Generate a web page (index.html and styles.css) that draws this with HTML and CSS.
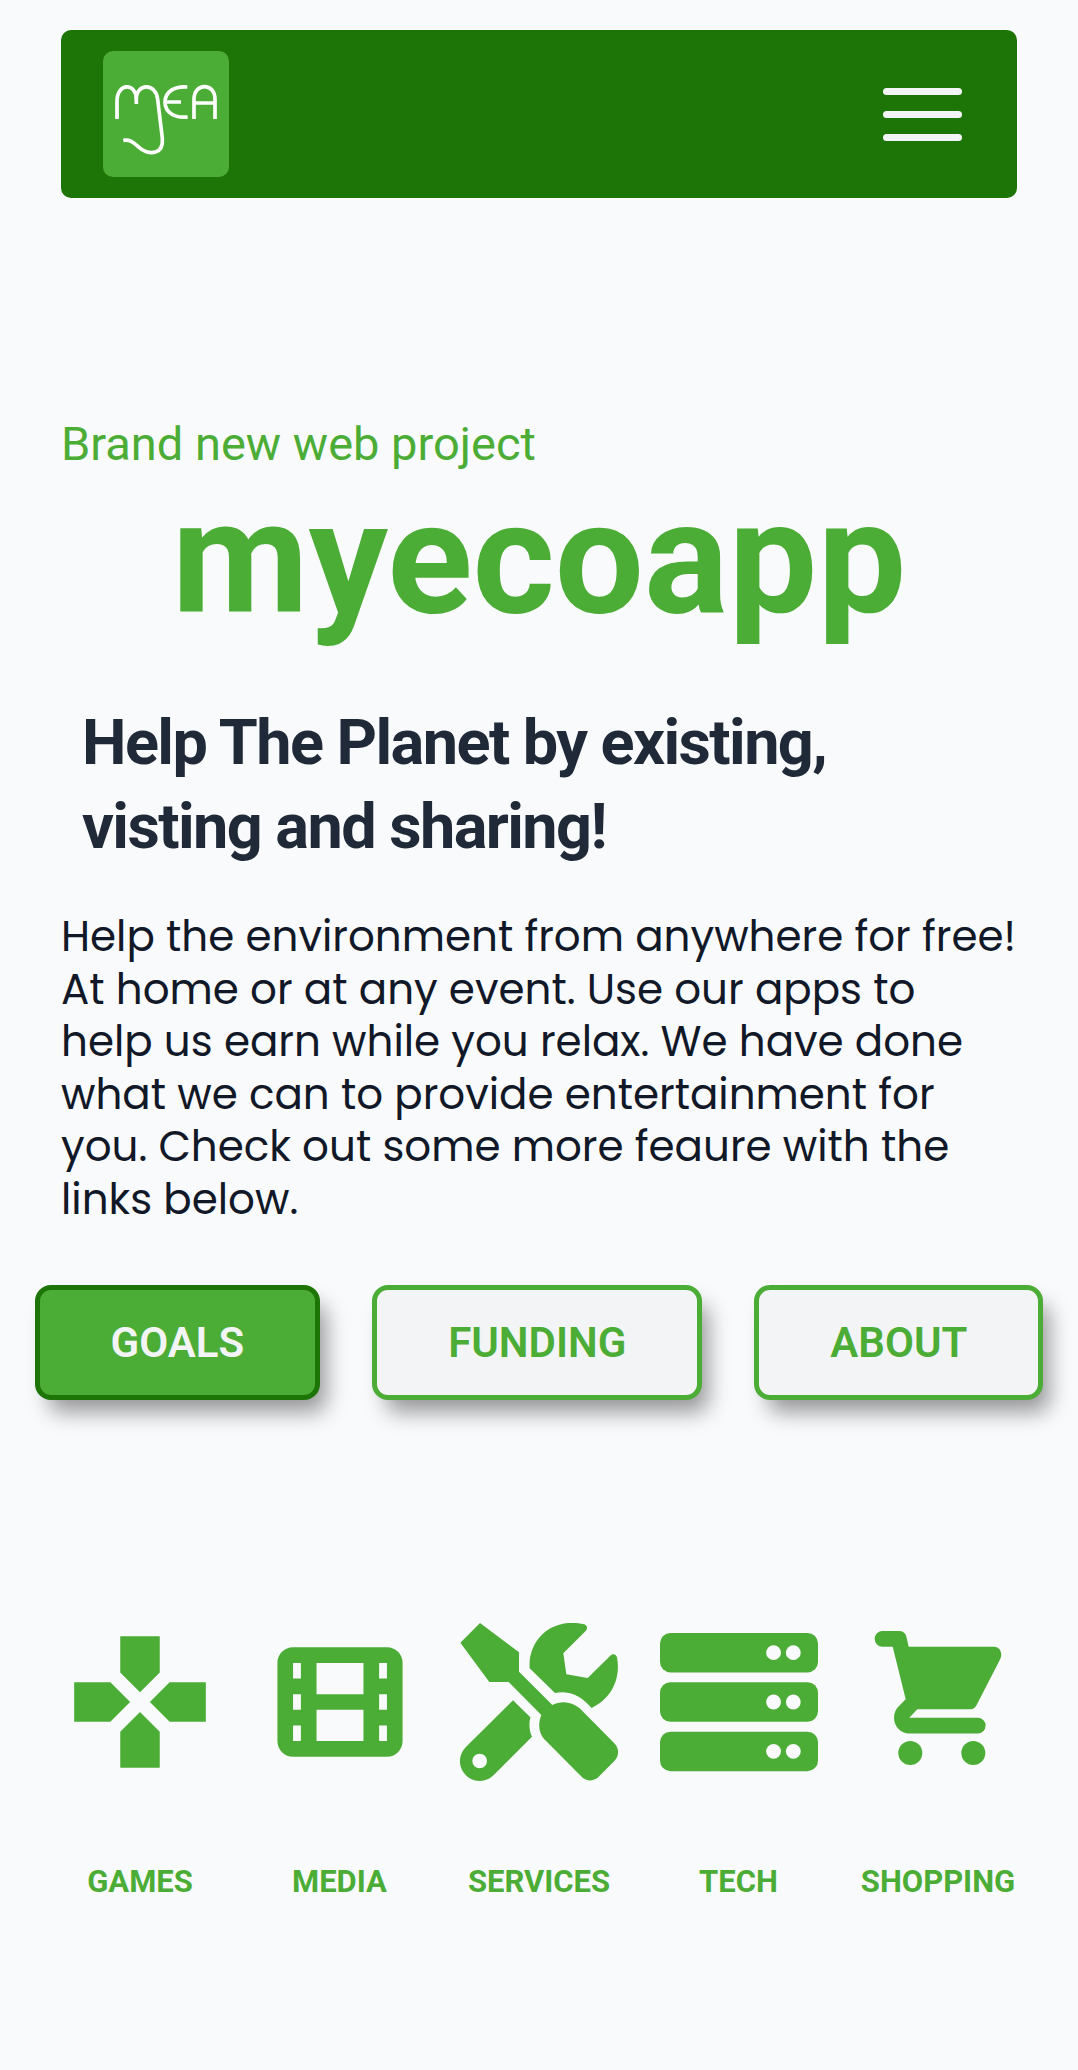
FILE: index.html
```html
<!DOCTYPE html>
<html lang="en">
<head>
<meta charset="utf-8">
<meta name="viewport" content="width=device-width, initial-scale=1">
<title>myecoapp</title>
<link rel="stylesheet" href="styles.css">
</head>
<body>
<div class="page">
  <header class="navbar">
    <a class="logo" href="#" aria-label="MEA home">
      <svg viewBox="159 93 378 378" fill="none" stroke="currentColor" stroke-width="11" aria-hidden="true">
        <path d="M201 297V244C201 186 259 188 259 238V252"/>
        <path d="M259 238C259 188 318 188 323 238L337 355C341 404 300 405 272 386C255 373 244 357 220 361"/>
        <path d="M412 201C372 198 345 216 345 246C345 278 374 295 413 291M345 246H393"/>
        <path d="M432 297V238C432 187 495 187 495 238V297M432 249H495"/>
      </svg>
    </a>
    <button class="menu-button" type="button" aria-label="Menu">
      <span class="menu-bar"></span>
      <span class="menu-bar"></span>
      <span class="menu-bar"></span>
    </button>
  </header>

  <main>
    <section class="hero">
      <p class="tagline">Brand new web project</p>
      <h1 class="title">myecoapp</h1>
      <h2 class="subtitle">Help The Planet by existing, visting and sharing!</h2>
      <p class="intro">Help the environment from anywhere for free! At home or at any event. Use our apps to help us earn while you relax. We have done what we can to provide entertainment for you. Check out some more feaure with the links below.</p>
      <div class="actions">
        <button class="button button-primary" type="button">GOALS</button>
        <button class="button" type="button">FUNDING</button>
        <button class="button" type="button">ABOUT</button>
      </div>
    </section>

    <nav class="categories" aria-label="Categories">
      <a class="category" href="#">
        <svg class="category-icon" viewBox="0 0 24 24" aria-hidden="true"><path d="M15 7.500V2H9v5.500l3 3 3-3zM7.500 9H2v6h5.500l3-3-3-3zM9 16.500V22h6v-5.500l-3-3-3 3zM16.500 9l-3 3 3 3H22V9h-5.500z"/></svg>
        <span>GAMES</span>
      </a>
      <a class="category" href="#">
        <svg class="category-icon" viewBox="-2.100 -3.100 20.200 20.200" aria-hidden="true"><path fill-rule="evenodd" d="M2 0H14A2 2 0 0 1 16 2V12A2 2 0 0 1 14 14H2A2 2 0 0 1 0 12V2A2 2 0 0 1 2 0ZM5 2V6H11V2ZM5 8V12H11V8ZM2 2V4H3V2ZM2 6V8H3V6ZM2 10V12H3V10ZM13 2V4H14V2ZM13 6V8H14V6ZM13 10V12H14V10Z"/></svg>
        <span>MEDIA</span>
      </a>
      <a class="category" href="#">
        <svg class="category-icon" viewBox="90 69 474 474" aria-hidden="true">
          <path d="M150 69L267 157V215L367 315C395 301 425 305 449 325L553 430C568 445 568 468 553 483L506 530C491 545 469 545 455 530L343 418C325 397 324 370 334 345L236 246H178L91 128Z"/>
          <path d="M299 205C293 120 365 50 463 73C472 77 474 86 467 93L400 160L409 223L473 234L541 167C548 160 558 162 561 172C573 235 545 296 485 324L470 309C443 281 409 272 375 279Z"/>
          <path fill-rule="evenodd" d="M249 301L301 352C296 372 298 392 306 410L192 524C168 549 130 549 107 525C84 502 84 466 107 442ZM149 461A22 22 0 1 0 149 505A22 22 0 1 0 149 461Z"/>
        </svg>
        <span>SERVICES</span>
      </a>
      <a class="category" href="#">
        <svg class="category-icon" viewBox="0 0 512 512" aria-hidden="true">
          <rect x="0" y="32" width="512" height="128" rx="34"/>
          <rect x="0" y="192" width="512" height="128" rx="34"/>
          <rect x="0" y="352" width="512" height="128" rx="34"/>
          <g class="icon-hole">
            <circle cx="368" cy="96" r="24"/><circle cx="432" cy="96" r="24"/>
            <circle cx="368" cy="256" r="24"/><circle cx="432" cy="256" r="24"/>
            <circle cx="368" cy="416" r="24"/><circle cx="432" cy="416" r="24"/>
          </g>
        </svg>
        <span>TECH</span>
      </a>
      <a class="category" href="#">
        <svg class="category-icon" viewBox="0 0 158 158" aria-hidden="true">
          <path d="M23.500 8H40C44 8 46.400 10 47.200 13L49.700 23.700H135C140.500 23.700 144.500 30 141 36.500L117.500 82.300C116 85 114 86.300 111.700 86.300H58.300L50.300 94.700H118.700A7.900 7.900 0 0 1 118.700 110.500H50.300C41.500 110.500 35 103 35 95C35 90.500 36.500 86.500 39.300 83.700L46.700 76.300L33.700 23.700H23.500A7.850 7.850 0 0 1 23.500 8Z"/>
          <circle cx="51.300" cy="130" r="12"/><circle cx="114.300" cy="130" r="12"/>
        </svg>
        <span>SHOPPING</span>
      </a>
    </nav>
  </main>
</div>
</body>
</html>
```
FILE: styles.css
```css
:root {
  --green: #4cad36;
  --green-dark: #1d7407;
  --page: #f9fafc;
  --light: #f3f4f6;
}

* {
  box-sizing: border-box;
}

body {
  margin: 0;
  background: var(--page);
  font-family: Roboto, "Liberation Sans", sans-serif;
  color: #111827;
}

h1, h2, p {
  margin: 0;
}

.page {
  padding: 30px 61px 160px;
}

.navbar {
  display: flex;
  align-items: center;
  justify-content: space-between;
  padding: 21px 42px;
  border-radius: 10px;
  background: var(--green-dark);
}

.logo {
  display: block;
  width: 126px;
  height: 126px;
  border-radius: 10px;
  background: var(--green);
  color: #fff;
}

.logo svg {
  display: block;
  width: 100%;
}

.menu-button {
  display: flex;
  flex-direction: column;
  gap: 16px;
  padding: 13px;
  border: 0;
  background: none;
}

.menu-bar {
  width: 79px;
  height: 7px;
  border-radius: 4px;
  background: var(--light);
}

.hero {
  margin-top: 211px;
}

.tagline {
  font-size: 47px;
  line-height: 70px;
  color: var(--green);
}

.title {
  font-size: 158px;
  line-height: 158px;
  font-weight: 700;
  text-align: center;
  color: var(--green);
}

.subtitle {
  margin-top: 64px;
  padding: 0 21px;
  font-size: 63px;
  line-height: 84px;
  font-weight: 700;
  letter-spacing: -0.025em;
  color: #1f2937;
}

.intro {
  margin-top: 42px;
  font-family: Poppins, "Open Sans", "Noto Sans", sans-serif;
  font-size: 42px;
  line-height: 1.25;
}

.actions {
  display: flex;
  justify-content: center;
  gap: 52px;
  margin: 59px -40px 0;
}

.button {
  padding: 28px 71px;
  border: 5px solid var(--green);
  border-radius: 16px;
  background: var(--light);
  box-shadow: 10px 16px 21px -4px rgba(0, 0, 0, 0.4);
  font-family: inherit;
  font-size: 42px;
  line-height: 49px;
  font-weight: 600;
  color: var(--green);
}

.button-primary {
  border-color: var(--green-dark);
  background: var(--green);
  color: var(--light);
}

.categories {
  display: flex;
  justify-content: space-between;
  margin-top: 223px;
}

.category {
  display: flex;
  flex-direction: column;
  align-items: center;
  gap: 80px;
  width: 158px;
  font-size: 31px;
  line-height: 42px;
  font-weight: 700;
  text-decoration: none;
  color: var(--green);
}

.category-icon {
  width: 158px;
  height: 158px;
  fill: currentColor;
}

.icon-hole {
  fill: var(--page);
}
```
